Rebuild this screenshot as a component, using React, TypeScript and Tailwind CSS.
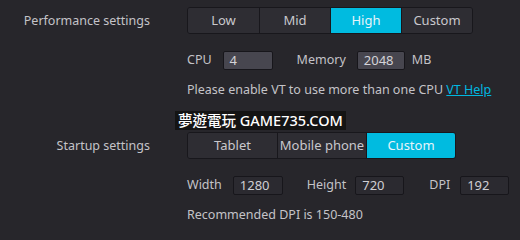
import React from "react";

const font = { fontFamily: '"Noto Sans", "Noto Sans CJK TC", sans-serif' };

function Segmented({ items, active, width }: { items: string[]; active: number; width: string }) {
  return (
    <div className="flex w-fit h-[27px] rounded-[3px] border border-[#18171c] overflow-hidden">
      {items.map((item, i) => (
        <div
          key={item}
          className={`${width} flex items-center justify-center text-[13px] ${
            i > 0 ? "border-l border-[#18171c]" : ""
          } ${i === active ? "bg-[#00bbe0] text-[#e6f4fa]" : "bg-[#2e2d33] text-[#c9c8cd]"}`}
        >
          {item}
        </div>
      ))}
    </div>
  );
}

function Field({ value, light, width }: { value: string; light?: boolean; width: string }) {
  return (
    <div
      className={`${width} h-[19px] rounded-[2px] border border-[#17161b] px-[6px] flex items-center text-[13px] ${
        light ? "bg-[#47464f] text-[#d4d3d8]" : "bg-[#2b2a30] text-[#d0cfd4]"
      }`}
    >
      {value}
    </div>
  );
}

export default function App() {
  return (
    <div className="relative w-[520px] h-[240px] bg-[#27262b] text-[#c4c3c8] text-[12.5px] pt-[7px]" style={font}>
      <div className="flex">
        <div className="w-[150px] text-right leading-[27px]">Performance settings</div>
        <div className="ml-[37px]">
          <Segmented items={["Low", "Mid", "High", "Custom"]} active={2} width="w-[71px]" />
          <div className="flex items-center mt-[17px] h-[19px]">
            <span>CPU</span>
            <div className="ml-[11px]">
              <Field value="4" light width="w-[50px]" />
            </div>
            <span className="ml-[24px]">Memory</span>
            <div className="ml-[11px]">
              <Field value="2048" light width="w-[48px]" />
            </div>
            <span className="ml-[7px]">MB</span>
          </div>
          <div className="mt-[10px] leading-[20px]">
            Please enable VT to use more than one CPU{" "}
            <span className="text-[#00b8e0] underline">VT Help</span>
          </div>
        </div>
      </div>

      <div className="flex mt-[32px]">
        <div className="w-[150px] text-right leading-[27px]">Startup settings</div>
        <div className="ml-[37px]">
          <Segmented items={["Tablet", "Mobile phone", "Custom"]} active={2} width="w-[89px]" />
          <div className="flex items-center mt-[17px] h-[19px]">
            <span>Width</span>
            <div className="ml-[11px]">
              <Field value="1280" width="w-[50px]" />
            </div>
            <span className="ml-[24px]">Height</span>
            <div className="ml-[9px]">
              <Field value="720" width="w-[49px]" />
            </div>
            <span className="ml-[25px]">DPI</span>
            <div className="ml-[10px]">
              <Field value="192" width="w-[49px]" />
            </div>
          </div>
          <div className="mt-[10px] leading-[20px]">Recommended DPI is 150-480</div>
        </div>
      </div>

      <div className="absolute left-[175px] top-[111px] h-[19px] px-[3px] bg-[#141414] text-white text-[14.5px] leading-[19px] font-medium">
        夢遊電玩 GAME735.COM
      </div>
    </div>
  );
}
